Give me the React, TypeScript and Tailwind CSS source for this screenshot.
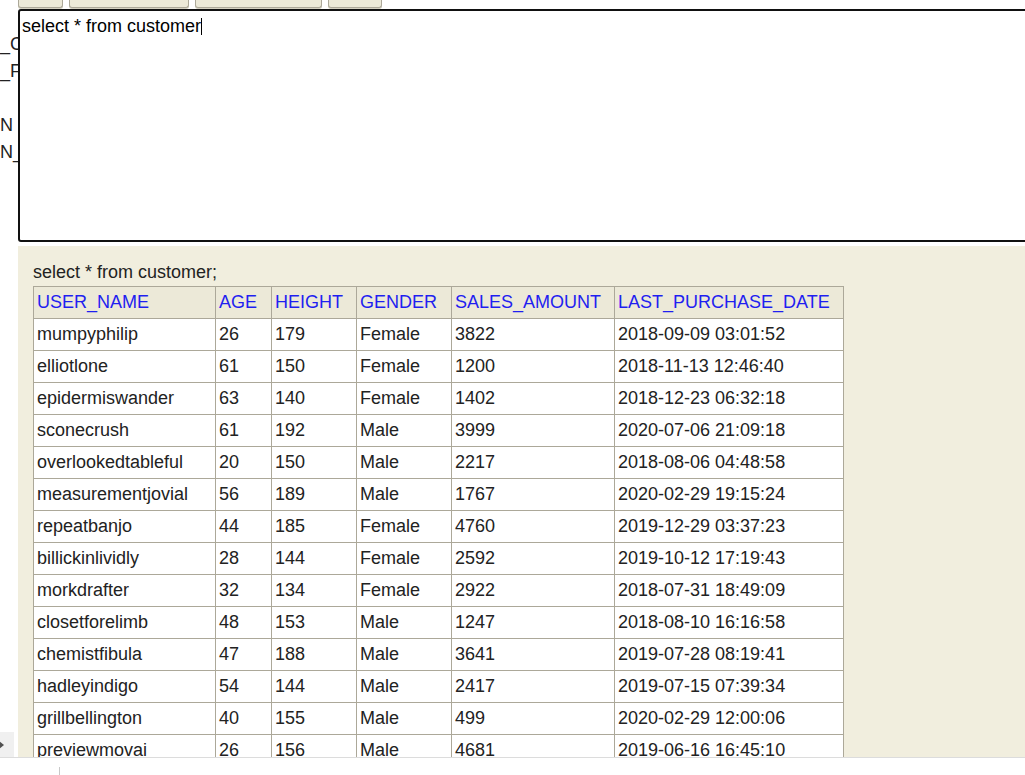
import React from "react"

const COLUMNS = ["USER_NAME", "AGE", "HEIGHT", "GENDER", "SALES_AMOUNT", "LAST_PURCHASE_DATE"]
const COL_WIDTHS = ["w-[182px]", "w-[56px]", "w-[85px]", "w-[95px]", "w-[163px]", "w-[229px]"]

const ROWS: string[][] = [
	["mumpyphilip", "26", "179", "Female", "3822", "2018-09-09 03:01:52"],
	["elliotlone", "61", "150", "Female", "1200", "2018-11-13 12:46:40"],
	["epidermiswander", "63", "140", "Female", "1402", "2018-12-23 06:32:18"],
	["sconecrush", "61", "192", "Male", "3999", "2020-07-06 21:09:18"],
	["overlookedtableful", "20", "150", "Male", "2217", "2018-08-06 04:48:58"],
	["measurementjovial", "56", "189", "Male", "1767", "2020-02-29 19:15:24"],
	["repeatbanjo", "44", "185", "Female", "4760", "2019-12-29 03:37:23"],
	["billickinlividly", "28", "144", "Female", "2592", "2019-10-12 17:19:43"],
	["morkdrafter", "32", "134", "Female", "2922", "2018-07-31 18:49:09"],
	["closetforelimb", "48", "153", "Male", "1247", "2018-08-10 16:16:58"],
	["chemistfibula", "47", "188", "Male", "3641", "2019-07-28 08:19:41"],
	["hadleyindigo", "54", "144", "Male", "2417", "2019-07-15 07:39:34"],
	["grillbellington", "40", "155", "Male", "499", "2020-02-29 12:00:06"],
	["previewmovai", "26", "156", "Male", "4681", "2019-06-16 16:45:10"],
]

// toolbar buttons, only their bottom edge is visible (page is scrolled)
const BUTTONS = ["w-[45px]", "w-[120px]", "w-[127px]", "w-[54px]"]

// tails of the schema list that sits behind the editor
const SIDE_LINES = ["_C", "_F", "", "N", "N_"]

const ResultTable: React.FC = () => (
	<table className="table-fixed border-separate border-spacing-0 border-t border-l border-[#aca899] w-[811px]">
		<thead>
			<tr>
				{COLUMNS.map((c, i) => (
					<th
						key={c}
						className={`${COL_WIDTHS[i]} h-[32px] p-0 pl-[3px] text-left font-normal text-[#1f1ff0] bg-[#ece9d8] border-r border-b border-[#aca899] whitespace-nowrap`}
					>
						{c}
					</th>
				))}
			</tr>
		</thead>
		<tbody>
			{ROWS.map((row) => (
				<tr key={row[0]}>
					{row.map((cell, i) => (
						<td
							key={i}
							className="h-[32px] p-0 pl-[3px] text-left bg-white text-[#222] border-r border-b border-[#aca899] whitespace-nowrap"
						>
							{cell}
						</td>
					))}
				</tr>
			))}
		</tbody>
	</table>
)

export default function App() {
	return (
		<div className="w-[1025px] h-[775px] flex flex-col overflow-hidden bg-white text-[18px] font-['Liberation_Sans',Arial,sans-serif] text-[#222]">
			<div className="h-[757px] flex">
				{/* Left side, mostly covered */}
				<div className="w-[18px] shrink-0 flex flex-col overflow-hidden">
					<div className="pt-[31px] flex flex-col">
						{SIDE_LINES.map((l, i) => (
							<div key={i} className="h-[27px] leading-[27px] whitespace-nowrap">
								{l}
							</div>
						))}
					</div>
					<div className="flex-1" />
					<div className="w-[14px] h-[25px] bg-[#f0f0f0] flex items-center">
						<svg width="5" height="8" viewBox="0 0 5 8" className="-ml-[1px]">
							<path d="M0 0 L5 4 L0 8 Z" fill="#505050" />
						</svg>
					</div>
				</div>

				{/* Main column */}
				<div className="flex-1 flex flex-col min-w-0 overflow-hidden">
					<div className="h-[8px] flex gap-[6px]">
						{BUTTONS.map((w, i) => (
							<div
								key={i}
								className={`${w} h-[8px] bg-[#ece9d8] border border-t-0 border-[#aca899] rounded-b-[3px] shadow-[0_1px_0_#d6d2c2]`}
							/>
						))}
					</div>

					{/* SQL editor */}
					<div className="mt-[1px] w-[1020px] h-[233px] shrink-0 border-2 border-[#111] rounded-[3px] bg-white pt-[5px] pl-[2px] leading-[20px] text-black whitespace-nowrap">
						<span>select * from customer</span>
						<span className="inline-block w-px h-[17px] bg-black align-[-3px]" />
					</div>

					{/* Result panel */}
					<div className="mt-[4px] flex-1 min-h-0 overflow-hidden bg-[#f1eede] pl-[15px] pt-[16px]">
						<div className="leading-[20px] mb-[4px]">select * from customer;</div>
						<ResultTable />
					</div>
				</div>
			</div>

			{/* Status strip */}
			<div className="h-[18px] border-t border-[#dcdcdc] bg-white flex">
				<div className="ml-[59px] mt-[9px] w-px h-[9px] bg-[#c8c8c8]" />
			</div>
		</div>
	)
}
